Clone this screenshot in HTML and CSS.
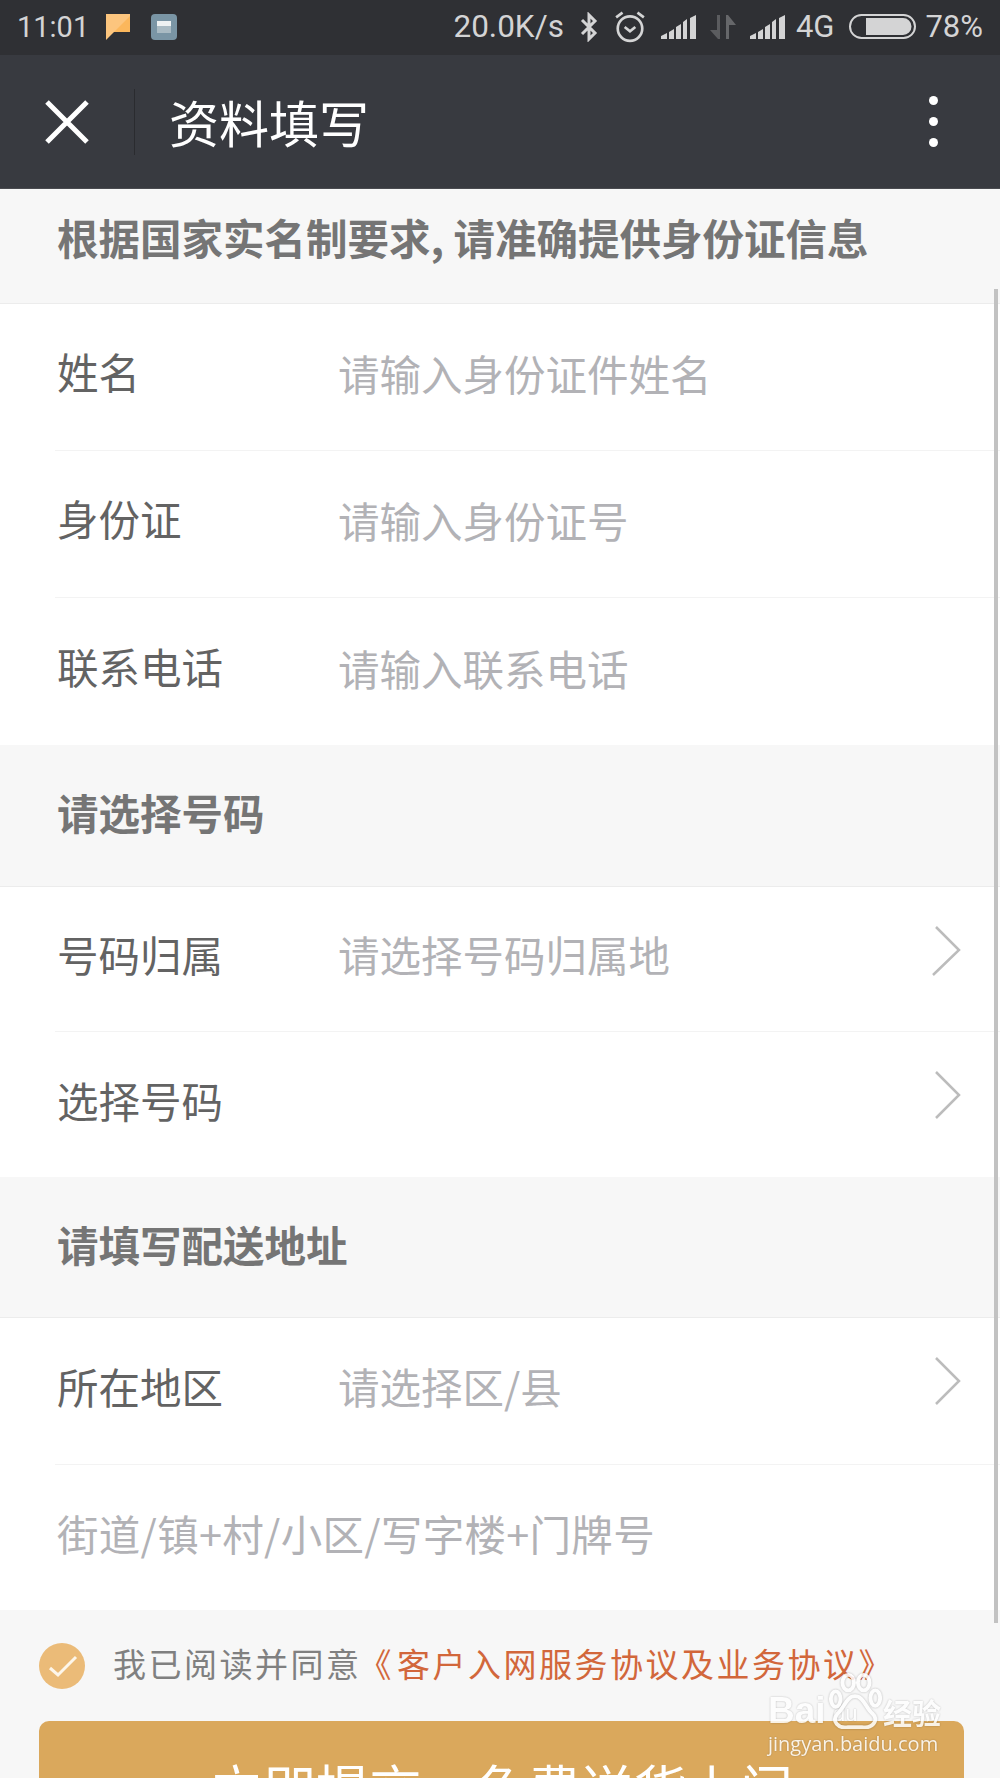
FILE: index.html
```html
<!DOCTYPE html>
<html lang="zh-CN">
<head>
<meta charset="utf-8">
<title>资料填写</title>
<link rel="stylesheet" href="styles.css">
</head>
<body>
<div class="screen">
  <header class="status">
    <div class="status-left">
      <span class="time">11:01</span>
      <svg class="ic-note" width="26" height="28" viewBox="0 0 26 28"><path d="M1 1H25V19H9L1 27Z" fill="#fcc57e"/><path d="M25 3V19H9Z" fill="#fbb75c"/></svg>
      <svg class="ic-app" width="26" height="26" viewBox="0 0 26 26"><rect width="26" height="26" rx="4" fill="#7a95a5"/><rect x="6" y="7" width="14" height="5" fill="#eef1f2"/><rect x="6" y="12" width="14" height="7" fill="#a9bac3"/></svg>
    </div>
    <div class="status-right">
      <span class="speed">20.0K/s</span>
      <svg class="ic-bt" width="20" height="30" viewBox="0 0 20 30"><path d="M3 8L16 21L10 27V3L16 9L3 22" fill="none" stroke="#d4d4d5" stroke-width="3"/></svg>
      <svg class="ic-alarm" width="32" height="32" viewBox="0 0 30 30"><circle cx="15" cy="16.500" r="11.500" fill="none" stroke="#d4d4d5" stroke-width="2.500"/><path d="M10 15L15 19L20 15" fill="none" stroke="#d4d4d5" stroke-width="2.500"/><path d="M2 6L8 1.500M28 6L22 1.500" stroke="#d4d4d5" stroke-width="2.500"/></svg>
      <svg class="ic-signal" width="35" height="24" viewBox="0 0 35 24"><path d="M0 24V21L6 18V24ZM8 24V17L13 14V24ZM15 24V12L20 9V24ZM22 24V7L26 4V24ZM29 24V3L35 0V24Z" fill="#d4d4d5"/></svg>
      <svg class="ic-data" width="26" height="26" viewBox="0 0 26 26"><path d="M0 16H7V1H10V25H8Z" fill="#5b5c5f"/><path d="M16 25V1H18L26 11H19V25Z" fill="#66676a"/></svg>
      <svg class="ic-signal" width="35" height="24" viewBox="0 0 35 24"><path d="M0 24V21L6 18V24ZM8 24V17L13 14V24ZM15 24V12L20 9V24ZM22 24V7L26 4V24ZM29 24V3L35 0V24Z" fill="#d4d4d5"/></svg>
      <span class="net">4G</span>
      <svg class="ic-batt" width="67" height="25" viewBox="0 0 67 25"><rect x="1" y="1" width="65" height="23" rx="11.500" fill="none" stroke="#d4d4d5" stroke-width="2"/><path d="M17 4H54A8.500 8.500 0 0 1 54 21H17Z" fill="#d4d4d5"/></svg>
      <span class="pct">78%</span>
    </div>
  </header>

  <nav class="navbar">
    <svg class="ic-close" width="44" height="44" viewBox="0 0 44 44"><path d="M2 2L42 42M42 2L2 42" stroke="#fff" stroke-width="5"/></svg>
    <span class="nav-sep"></span>
    <h1 class="nav-title">资料填写</h1>
    <span class="nav-more"><i></i><i></i><i></i></span>
  </nav>

  <main class="form">
    <h2 class="sec sec-first">根据国家实名制要求, 请准确提供身份证信息</h2>
    <section class="group group-id">
      <div class="row"><span class="label">姓名</span><span class="ph">请输入身份证件姓名</span></div>
      <div class="row"><span class="label">身份证</span><span class="ph">请输入身份证号</span></div>
      <div class="row row-last"><span class="label">联系电话</span><span class="ph">请输入联系电话</span></div>
    </section>

    <h2 class="sec sec-two">请选择号码</h2>
    <section class="group">
      <div class="row row-short"><span class="label">号码归属</span><span class="ph">请选择号码归属地</span>
        <svg class="chev" width="30" height="50" viewBox="0 0 30 50"><path d="M4 1L27 24L1 49" fill="none" stroke="#bcbcbc" stroke-width="2.500"/></svg></div>
      <div class="row row-short row-last"><span class="label">选择号码</span>
        <svg class="chev" width="30" height="50" viewBox="0 0 30 50"><path d="M4 1L27 24L4 47" fill="none" stroke="#bcbcbc" stroke-width="2.500"/></svg></div>
    </section>

    <h2 class="sec sec-three">请填写配送地址</h2>
    <section class="group">
      <div class="row row-area"><span class="label">所在地区</span><span class="ph">请选择区/县</span>
        <svg class="chev" width="30" height="50" viewBox="0 0 30 50"><path d="M4 1L27 24L4 47" fill="none" stroke="#bcbcbc" stroke-width="2.500"/></svg></div>
      <div class="row row-last row-addr"><span class="ph ph-wide">街道/镇+村/小区/写字楼+门牌号</span></div>
    </section>

    <footer class="foot">
      <div class="agree">
        <svg class="ic-check" width="46" height="46" viewBox="0 0 46 46"><circle cx="23" cy="23" r="23" fill="#ebbb78"/><path d="M11 25L19 32L37 14" fill="none" stroke="#fdf6ea" stroke-width="3"/></svg>
        <span class="agree-text">我已阅读并同意<span class="agree-link">《 客户入网服务协议及业务协议》</span></span>
      </div>
      <button class="submit" type="button">立即提交，免费送货上门</button>
    </footer>
  </main>

  <div class="scrollbar"></div>

  <div class="watermark">
    <div class="wm-top"><span class="wm-bai">Bai</span><span class="wm-du">du</span><span class="wm-cn">经验</span>
      <svg class="wm-paw" width="54" height="56" viewBox="0 0 54 58"><g fill="none" stroke="#fff" stroke-width="4"><ellipse cx="7" cy="27" rx="5" ry="8"/><ellipse cx="20" cy="10" rx="6" ry="8"/><ellipse cx="36" cy="10" rx="6" ry="8"/><ellipse cx="48" cy="26" rx="5" ry="8"/><path d="M27 24C18 24 16 36 9 42C2 50 10 58 20 56H34C46 58 52 48 45 42C38 36 36 24 27 24Z"/></g></svg>
    </div>
    <div class="wm-url">jingyan.baidu.com</div>
  </div>
</div>
</body>
</html>
```
FILE: styles.css
```css
* { box-sizing: border-box; }
html, body { margin: 0; padding: 0; }
body {
  width: 1000px;
  height: 1778px;
  overflow: hidden;
  font-family: "Noto Sans CJK SC", "Noto Sans", sans-serif;
  background: #f7f7f7;
}
.screen { position: relative; width: 1000px; height: 1778px; overflow: hidden; }

.status {
  height: 55px;
  background: #2f3034;
  color: #d4d4d5;
  display: flex;
  justify-content: space-between;
  align-items: center;
  font-family: Roboto, sans-serif;
  font-size: 31px;
  padding: 0 17px 2px 17px;
}
.status-left, .status-right { display: flex; align-items: center; }
.time { width: 88px; font-size: 29px; }
.ic-note { margin-right: 20px; }
.speed { margin-right: 15px; font-size: 31.500px; }
.ic-bt { margin-right: 15px; }
.ic-alarm { margin-right: 15px; }
.ic-data { margin: 0 14px; }
.net { margin: 0 15px 0 11px; }
.ic-batt { margin-right: 9px; }

.navbar {
  height: 134px;
  background: #383a40;
  display: flex;
  align-items: center;
  padding-left: 45px;
  border-bottom: 1px solid #4a4b50;
}
.ic-close { flex: none; }
.nav-sep { width: 1px; height: 66px; background: #2a2b2f; margin-left: 45px; }
.nav-title {
  margin: 0 0 0 34px;
  font-size: 50px;
  font-weight: 400;
  line-height: 1;
  color: #fff;
  flex: 1;
  padding-bottom: 2px;
}
.nav-more { display: flex; flex-direction: column; gap: 12px; margin-right: 62px; }
.nav-more i { display: block; width: 9px; height: 9px; border-radius: 50%; background: #fff; }

.form { display: flex; flex-direction: column; }
.sec {
  margin: 0;
  padding-left: 57px;
  font-size: 41.500px;
  line-height: 1;
  font-weight: 700;
  color: #757575;
  background: #f7f7f7;
  border-bottom: 1px solid #ececec;
}
.sec-first { height: 115px; padding-top: 28px; }
.sec-two { height: 142px; padding-top: 47px; }
.sec-three { height: 141px; padding-top: 47px; }

.group { background: #fff; }
.row {
  position: relative;
  display: flex;
  align-items: center;
  height: 147px;
  margin-left: 55px;
  padding-left: 2px;
  padding-bottom: 10px;
  border-bottom: 1px solid #f3f3f3;
  font-size: 41.500px;
}
.row-short { height: 145px; padding-bottom: 8px; }
.row-area { padding-bottom: 8px; }
.row-last { border-bottom: 0; }
.row-addr { height: 145px; padding-bottom: 8px; }
.label { width: 281px; color: #636363; flex: none; line-height: 1; }
.ph { color: #b2b2b6; line-height: 1; }
.group-id .ph { margin-top: 4px; }
.ph-wide { letter-spacing: .3px; }
.chev { position: absolute; right: 38px; top: 39px; }

.foot {
  padding: 33px 39px 0;
  background: #f7f7f7;
}
.agree { display: flex; align-items: center; height: 46px; }
.ic-check { flex: none; margin-right: 28px; }
.agree-text { font-size: 33px; line-height: 1; color: #808080; white-space: nowrap; letter-spacing: 2.500px; word-spacing: -7px; padding-bottom: 6px; }
.agree-link { color: #d2673b; margin-left: -3px; }
.submit {
  display: block;
  width: 925px;
  height: 110px;
  margin-top: 32px;
  border: 0;
  border-radius: 10px;
  background: #daa85c;
  color: #fff;
  font-family: inherit;
  font-size: 53px;
  line-height: 1;
  padding: 22px 0 0;
}

.scrollbar {
  position: absolute;
  left: 994px;
  top: 289px;
  width: 4px;
  height: 1334px;
  background: #c2c2c2;
}

.watermark {
  position: absolute;
  left: 768px;
  top: 1673px;
  width: 185px;
  color: #fff;
  opacity: .85;
  text-shadow: 0 0 2px rgba(0, 0, 0, .3);
}
.wm-top { position: relative; height: 54px; display: flex; align-items: flex-end; }
.wm-bai { font-family: "Liberation Sans", sans-serif; font-weight: 700; font-size: 37px; line-height: 1; width: 65px; margin-bottom: -2px; }
.wm-du { font-family: "Liberation Sans", sans-serif; font-size: 22px; line-height: 1; width: 50px; margin-bottom: 2px; }
.wm-cn { font-size: 29px; line-height: 1; font-weight: 700; margin-bottom: 0; }
.wm-paw { position: absolute; left: 60px; top: 0; filter: drop-shadow(0 0 1px rgba(0, 0, 0, .3)); }
.wm-url { font-family: "Open Sans", sans-serif; font-size: 20px; line-height: 1; margin-top: 7px; white-space: nowrap; }
```
